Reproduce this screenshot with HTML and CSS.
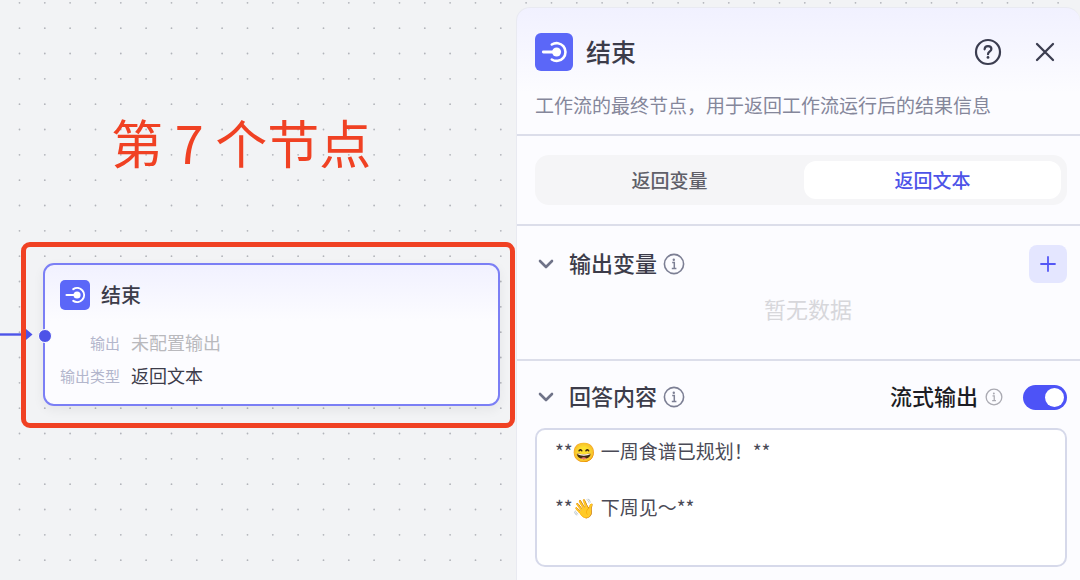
FILE: index.html
```html
<!DOCTYPE html>
<html lang="zh-CN">
<head>
<meta charset="utf-8">
<meta name="viewport" content="width=device-width, initial-scale=1">
<title>结束</title>
<link rel="stylesheet" href="styles.css">
</head>
<body>
<svg class="symbols" aria-hidden="true">
  <symbol id="icon-end" viewBox="0 0 38 38">
    <path d="M8.3 19H18" fill="none" stroke="#fff" stroke-width="2.8" stroke-linecap="round"/>
    <circle cx="21.6" cy="19" r="4.5" fill="#fff"/>
    <path d="M16.8 11.5A8.9 8.9 0 1 1 16.8 26.5" fill="none" stroke="#fff" stroke-width="2.6" stroke-linecap="round"/>
  </symbol>
  <symbol id="icon-info" viewBox="0 0 22 22">
    <circle cx="11" cy="11" r="9.6" fill="none" stroke="currentColor" stroke-width="1.6"/>
    <circle cx="10.8" cy="6.8" r="1.2" fill="currentColor"/>
    <path d="M9.2 9.6H11.3V15.2M8.8 15.4H13.4" fill="none" stroke="currentColor" stroke-width="1.5"/>
  </symbol>
  <symbol id="icon-chevron" viewBox="0 0 16 16">
    <path d="M2 5L8 11L14 5" fill="none" stroke="currentColor" stroke-width="2.6" stroke-linecap="round" stroke-linejoin="round"/>
  </symbol>
</svg>

<svg class="grid-dots" aria-hidden="true">
  <defs>
    <pattern id="dots" width="76" height="76" patternUnits="userSpaceOnUse">
      <g fill="#b2b4ba">
        <circle cx="19.5" cy="2.8" r=".9"/><circle cx="44.8" cy="2.8" r=".9"/><circle cx="70.1" cy="2.8" r=".9"/>
        <circle cx="19.5" cy="28.2" r=".9"/><circle cx="44.8" cy="28.2" r=".9"/><circle cx="70.1" cy="28.2" r=".9"/>
        <circle cx="19.5" cy="53.5" r=".9"/><circle cx="44.8" cy="53.5" r=".9"/><circle cx="70.1" cy="53.5" r=".9"/>
      </g>
    </pattern>
  </defs>
  <rect width="100%" height="100%" fill="url(#dots)"/>
</svg>

<div class="workspace">
  <main class="canvas">
    <h1 class="note">第 7 个节点</h1>

    <svg class="edge" viewBox="0 0 34 14" aria-hidden="true">
      <path d="M0 6.5H28" stroke="#4d53e8" stroke-width="2.4"/>
      <path d="M26 1L32.5 6.5L26 12Z" fill="#4d53e8"/>
    </svg>

    <article class="node">
      <header class="node-head">
        <svg class="badge badge-small" aria-hidden="true"><use href="#icon-end"/></svg>
        <h2 class="node-title">结束</h2>
      </header>
      <dl class="node-fields">
        <dt>输出</dt><dd class="unset">未配置输出</dd>
        <dt>输出类型</dt><dd>返回文本</dd>
      </dl>
      <span class="port"></span>
    </article>
    <div class="highlight"></div>
  </main>

  <aside class="panel">
    <header class="panel-head">
      <div class="title-row">
        <svg class="badge" aria-hidden="true"><use href="#icon-end"/></svg>
        <h2 class="panel-title">结束</h2>
        <button class="icon-button" type="button" aria-label="帮助">
          <svg width="28" height="28" viewBox="0 0 28 28" fill="none" stroke="currentColor" aria-hidden="true">
            <circle cx="14" cy="14" r="12" stroke-width="2.2"/>
            <path d="M10.6 11.3C10.7 9.2 12 8.1 14 8.1C16 8.1 17.4 9.2 17.4 11C17.4 13.4 14 13.4 14 16.2" stroke-width="2.2" stroke-linecap="round"/>
            <circle cx="14" cy="19.4" r="1.4" fill="currentColor" stroke="none"/>
          </svg>
        </button>
        <button class="icon-button" type="button" aria-label="关闭">
          <svg width="28" height="28" viewBox="0 0 28 28" fill="none" stroke="currentColor" stroke-width="2.3" stroke-linecap="round" aria-hidden="true">
            <path d="M6 6L22 22M22 6L6 22"/>
          </svg>
        </button>
      </div>
      <p class="description">工作流的最终节点，用于返回工作流运行后的结果信息</p>
    </header>

    <section class="mode">
      <div class="tabs" role="tablist">
        <button class="tab" type="button" role="tab" aria-selected="false">返回变量</button>
        <button class="tab active" type="button" role="tab" aria-selected="true">返回文本</button>
      </div>
    </section>

    <section class="block variables">
      <header class="block-head">
        <button class="fold" type="button" aria-label="折叠输出变量"><svg width="16" height="16" aria-hidden="true"><use href="#icon-chevron"/></svg></button>
        <h3 class="block-title">输出变量</h3>
        <svg class="info" aria-hidden="true"><use href="#icon-info"/></svg>
        <button class="add" type="button" aria-label="添加变量">
          <svg width="18" height="18" viewBox="0 0 18 18" stroke="currentColor" stroke-width="1.8" stroke-linecap="round" aria-hidden="true"><path d="M2 9H16M9 2V16"/></svg>
        </button>
      </header>
      <p class="empty">暂无数据</p>
    </section>

    <section class="block answer">
      <header class="block-head">
        <button class="fold" type="button" aria-label="折叠回答内容"><svg width="16" height="16" aria-hidden="true"><use href="#icon-chevron"/></svg></button>
        <h3 class="block-title" id="answer-title">回答内容</h3>
        <svg class="info" aria-hidden="true"><use href="#icon-info"/></svg>
        <label class="stream" for="stream">流式输出</label>
        <svg class="info info-small" aria-hidden="true"><use href="#icon-info"/></svg>
        <input class="switch" id="stream" type="checkbox" role="switch" checked>
      </header>
      <textarea class="content" aria-labelledby="answer-title" rows="4">**😄 一周食谱已规划！**

**👋 下周见～**</textarea>
    </section>
  </aside>
</div>
</body>
</html>
```

FILE: styles.css
```css
* {
  box-sizing: border-box;
}

body {
  margin: 0;
  background: #f2f3f5;
  color: #3c3c4a;
  font-family: "Noto Sans CJK SC", "Liberation Sans", sans-serif;
}

h1, h2, h3, p, dl, dd {
  margin: 0;
}

button {
  padding: 0;
  border: 0;
  background: none;
  color: inherit;
  font: inherit;
  cursor: pointer;
}

svg {
  display: block;
}

.symbols {
  position: absolute;
  width: 0;
  height: 0;
}

.grid-dots {
  position: absolute;
  inset: 0;
  width: 100%;
  height: 100%;
}

.workspace {
  position: relative;
  display: grid;
  grid-template-columns: 43fr 47fr;
  min-height: 100vh;
}

.canvas {
  position: relative;
}

.note {
  position: absolute;
  top: 102px;
  left: 111px;
  color: #f04123;
  font-size: 52px;
  font-weight: 400;
  line-height: 80px;
  white-space: nowrap;
}

.edge {
  position: absolute;
  top: 328px;
  left: 0;
  width: 34px;
  height: 14px;
}

.node {
  position: absolute;
  top: 263px;
  left: 43px;
  right: 16px;
  padding: 15px 15px 12px;
  border: 2px solid #7b7ff5;
  border-radius: 11px;
  background: linear-gradient(#f1f1ff, #fcfcff 56px);
  box-shadow: 0 4px 12px rgba(0, 0, 0, 0.06);
}

.node-head {
  display: flex;
  align-items: center;
  gap: 11px;
}

.badge {
  flex: none;
  width: 38px;
  height: 38px;
  border-radius: 6px;
  background: #5b67f8;
}

.badge-small {
  width: 30px;
  height: 30px;
  border-radius: 5px;
}

.node-title {
  font-size: 20px;
  font-weight: 500;
  line-height: 30px;
}

.node-fields {
  display: grid;
  grid-template-columns: 60px 1fr;
  column-gap: 11px;
  padding-top: 16px;
  line-height: 33px;
}

.node-fields dt {
  color: #b3b6cc;
  font-size: 15px;
  text-align: right;
}

.node-fields dd {
  font-size: 18px;
}

.node-fields .unset {
  color: #b9b9bd;
}

.port {
  position: absolute;
  top: 64px;
  left: -7px;
  width: 14px;
  height: 14px;
  border: 1px solid #fff;
  border-radius: 50%;
  background: #4d53e8;
}

.highlight {
  position: absolute;
  top: 242px;
  left: 21px;
  right: 1px;
  height: 186px;
  border: 5px solid #f04123;
  border-radius: 9px;
}

.panel {
  margin-top: 7px;
  border: 1px solid #e9eaf1;
  border-width: 1px 0 0 1px;
  border-radius: 14px 14px 0 0;
  background: linear-gradient(#f1f1ff, #fcfcff 84px);
}

.panel-head {
  padding: 25px 21px 15px 18px;
  border-bottom: 2px solid #dcdeea;
}

.title-row {
  display: flex;
  align-items: center;
}

.panel-title {
  flex: 1;
  margin-left: 13px;
  padding-bottom: 2px;
  font-size: 25px;
  font-weight: 500;
  line-height: 36px;
}

.icon-button {
  margin-left: 29px;
  color: #3b3d50;
}

.description {
  margin-top: 20px;
  color: #85879b;
  font-size: 19px;
  line-height: 28px;
}

.mode {
  padding: 19px 13px 19px 18px;
  border-bottom: 2px solid #dcdeea;
}

.tabs {
  display: grid;
  grid-template-columns: 1fr 1fr;
  gap: 6px;
  padding: 6px;
  border-radius: 14px;
  background: #f5f5f7;
}

.tab {
  height: 38px;
  padding-bottom: 2px;
  border-radius: 12px;
  color: #606069;
  font-size: 19px;
  font-weight: 500;
}

.tab.active {
  background: #fff;
  color: #4d53e8;
}

.block {
  padding: 19px 13px 12px 18px;
}

.variables {
  padding-bottom: 34px;
  border-bottom: 2px solid #dcdeea;
}

.block-head {
  display: flex;
  align-items: center;
  height: 38px;
}

.fold {
  margin: 0 15px 0 3px;
  color: #6f7388;
}

.block-title,
.stream {
  padding-bottom: 4px;
  font-size: 22px;
  font-weight: 500;
  line-height: 32px;
}

.info {
  flex: none;
  width: 22px;
  height: 22px;
  margin-left: 6px;
  color: #7c7f94;
}

.info-small {
  width: 18px;
  height: 18px;
  margin-left: 7px;
  color: #aaaab2;
}

.add {
  display: grid;
  place-items: center;
  width: 38px;
  height: 38px;
  margin-left: auto;
  border-radius: 8px;
  background: #e4e6ff;
  color: #5457f5;
}

.empty {
  padding-left: 14px;
  margin-top: 8px;
  color: #d7d7db;
  font-size: 22px;
  line-height: 34px;
  text-align: center;
}

.answer {
  padding-top: 17px;
}

.stream {
  margin-left: auto;
  color: #1d1d24;
}

.switch {
  flex: none;
  appearance: none;
  width: 44px;
  height: 25px;
  margin: 0 0 0 20px;
  padding: 3px;
  border-radius: 13px;
  background: #c9cad6;
  cursor: pointer;
}

.switch::before {
  content: "";
  display: block;
  width: 19px;
  height: 19px;
  border-radius: 50%;
  background: #fff;
}

.switch:checked {
  background: #4d53f7;
}

.switch:checked::before {
  margin-left: auto;
}

.content {
  display: block;
  width: 100%;
  height: 139px;
  margin-top: 12px;
  padding: 7px 18px;
  border: 2px solid #d6d9ea;
  border-radius: 10px;
  background: #fff;
  color: #4a4a56;
  font: 19px/28px "Noto Sans CJK SC", "Noto Color Emoji", sans-serif;
  resize: none;
}
```
